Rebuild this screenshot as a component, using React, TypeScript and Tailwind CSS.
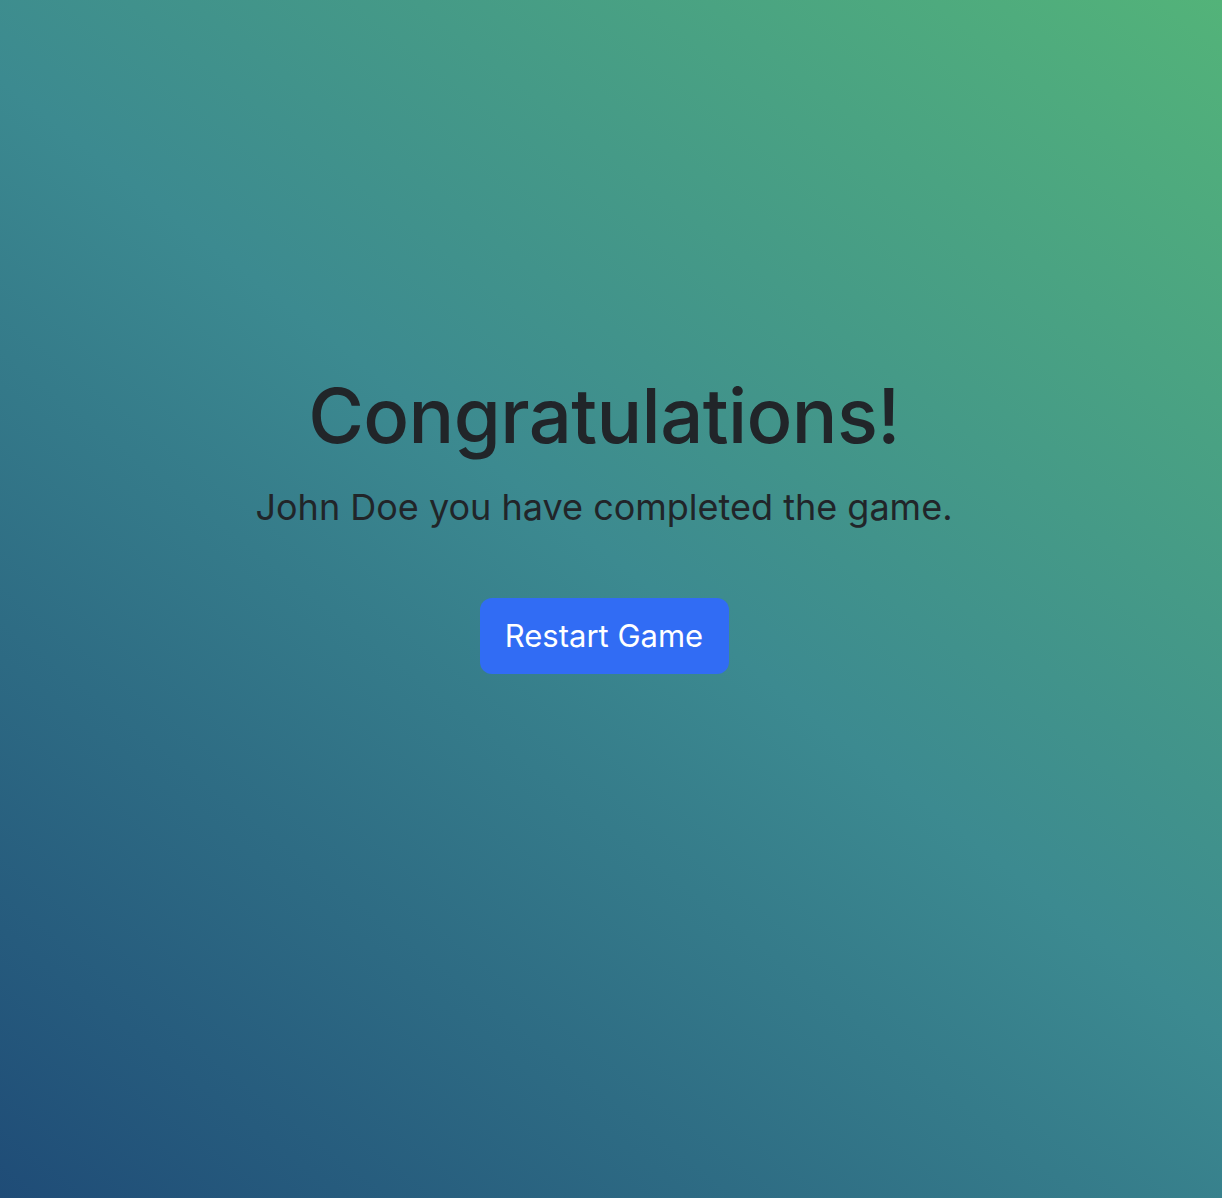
export default function App() {
  return (
    <div
      className="w-full h-[1198px] bg-[linear-gradient(38deg,#1f4c77_0%,#3c8a90_52%,#53b379_100%)] flex flex-col items-center pt-[370px] pr-[14px] text-[#212529]"
      style={{ fontFamily: "Inter, 'Noto Sans', sans-serif" }}
    >
      <h1 className="text-[76px] leading-[1.2] font-medium tracking-[-0.6px]">Congratulations!</h1>
      <p className="text-[36px] leading-[1.2] mt-[25px]">John Doe you have completed the game.</p>
      <button className="mt-[69px] w-[249px] h-[76px] rounded-[12px] bg-[#316cf4] text-white text-[31px]">
        Restart Game
      </button>
    </div>
  );
}
